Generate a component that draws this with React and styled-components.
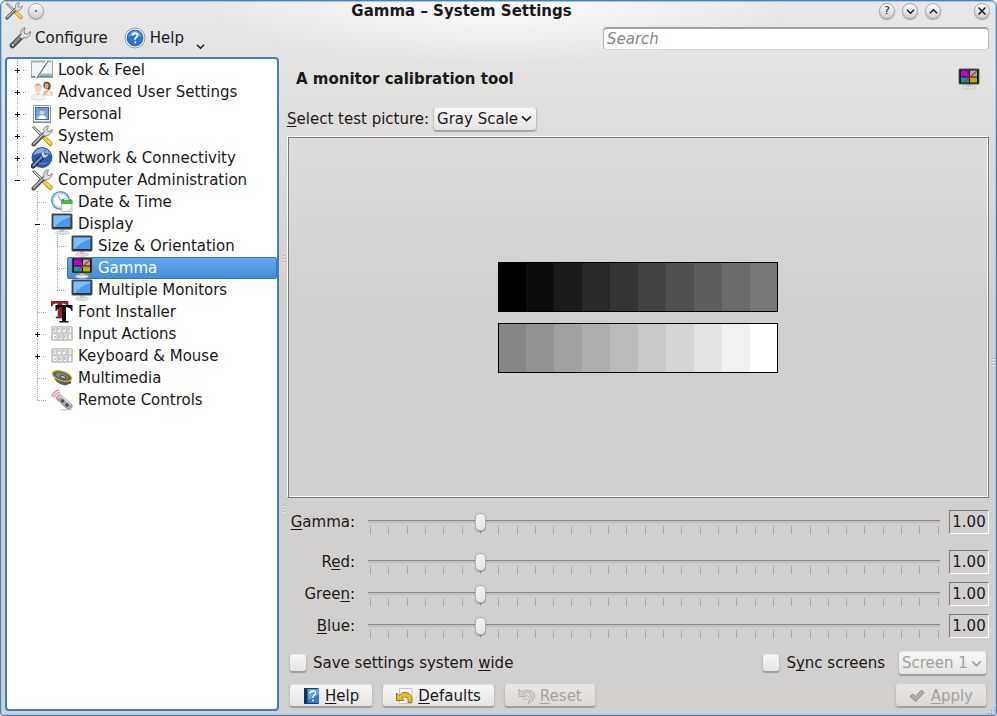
import React, { useState } from "react";
import styled, { createGlobalStyle, css } from "styled-components";

const tree = [
  { name: "Look & Feel", icon: "look", guides: ["tee"], toggle: "plus" },
  { name: "Advanced User Settings", icon: "users", guides: ["tee"], toggle: "plus" },
  { name: "Personal", icon: "personal", guides: ["tee"], toggle: "plus" },
  { name: "System", icon: "tools", guides: ["tee"], toggle: "plus" },
  { name: "Network & Connectivity", icon: "network", guides: ["tee"], toggle: "plus" },
  { name: "Computer Administration", icon: "tools", guides: ["end"], toggle: "minus" },
  { name: "Date & Time", icon: "clock", guides: ["blank", "tee"] },
  { name: "Display", icon: "monitor", guides: ["blank", "tee"], toggle: "minus" },
  { name: "Size & Orientation", icon: "monitor", guides: ["blank", "line", "tee"] },
  { name: "Gamma", icon: "gamma", guides: ["blank", "line", "tee"] },
  { name: "Multiple Monitors", icon: "monitor", guides: ["blank", "line", "end"] },
  { name: "Font Installer", icon: "font", guides: ["blank", "tee"] },
  { name: "Input Actions", icon: "keyboard", guides: ["blank", "tee"], toggle: "plus" },
  { name: "Keyboard & Mouse", icon: "keyboard", guides: ["blank", "tee"], toggle: "plus" },
  { name: "Multimedia", icon: "speaker", guides: ["blank", "tee"] },
  { name: "Remote Controls", icon: "remote", guides: ["blank", "end"] },
];

const darkGrays = ["#000000", "#0d0d0d", "#1b1b1b", "#282828", "#353535", "#434343", "#505050", "#5d5d5d", "#6b6b6b", "#787878"];
const lightGrays = ["#868686", "#939393", "#a1a1a1", "#aeaeae", "#bbbbbb", "#c9c9c9", "#d6d6d6", "#e4e4e4", "#f1f1f1", "#ffffff"];

const channels = [
  { id: "gamma", before: "", key: "G", after: "amma:" },
  { id: "red", before: "R", key: "e", after: "d:" },
  { id: "green", before: "Gree", key: "n", after: ":" },
  { id: "blue", before: "", key: "B", after: "lue:" },
];

const ticks = Array.from({ length: 32 }, (_, i) => i);

/* ---------- icons ---------- */

const MonitorStand = () => (
  <g>
    <ellipse cx="11" cy="19.500" rx="6.500" ry="1.800" fill="#e2e2e2" stroke="#b5b5b5" strokeWidth="0.600" />
    <path d="M9 15 H13 V19 H9 Z" fill="#c6c6c6" />
  </g>
);

const icons = {
  wrench: (
    <g>
      <path d="M3.500 18.500 L12.500 9.500" stroke="#4a4a4a" strokeWidth="5.500" strokeLinecap="round" />
      <path d="M4 17.500 L12.500 9" stroke="#8f8f8f" strokeWidth="2.500" strokeLinecap="round" />
      <path d="M16 0.800 C12.500 1.500 11 4.500 12 7.500 L10.500 9.500 L13 12 L15 10.800 C18.500 11.500 21.500 9 21.500 4.500 L18.500 7 L15.500 6.500 L15 3.800 Z" fill="#dedede" stroke="#6e6e6e" strokeWidth="0.900" />
      <circle cx="3.800" cy="18" r="1.500" fill="#f0f0f0" stroke="#333" strokeWidth="0.700" />
    </g>
  ),
  tools: (
    <g>
      <path d="M1.500 2.500 L3 1.500 L12 10 L10.500 11.500 Z" fill="#e3e3e3" stroke="#444" strokeWidth="0.900" />
      <path d="M11.500 13.500 L14 11 L21 17.500 Q22 20.500 19 21 Z" fill="#f3c321" stroke="#a8820d" strokeWidth="0.800" />
      <path d="M13.800 12.800 L20 18.500" stroke="#ffe98a" />
      <path d="M2.500 19.500 L13.500 8.500" stroke="#474747" strokeWidth="4" strokeLinecap="round" />
      <path d="M2.700 18.800 L13.500 8" stroke="#b9b9b9" strokeWidth="1.800" strokeLinecap="round" />
      <path d="M17.500 0.800 C14 0.800 12 3.500 13 7 L11.500 9.500 L13.500 11 C17.500 11 21 9 21.300 4.500 L18 6.800 L15.800 5.500 Z" fill="#dcdcdc" stroke="#707070" strokeWidth="0.800" />
    </g>
  ),
  look: (
    <g>
      <rect x="0.500" y="2" width="21" height="16" fill="#f3f4f4" stroke="#a5aaa9" />
      <rect x="1" y="2" width="14" height="1.500" fill="#9fb9b1" />
      <rect x="17" y="2" width="3" height="1.500" fill="#e69a9a" />
      <path d="M8 17 L10 14.500 H21 V17 Z" fill="#83c3bd" />
      <rect x="0" y="17" width="22" height="1.500" fill="#6c858b" />
      <path d="M5 19 L17 1" stroke="#fff" strokeWidth="3" />
      <path d="M5.500 19.500 L17.500 1.500" stroke="#5d5d5d" strokeWidth="1.100" />
    </g>
  ),
  users: (
    <g>
      <path d="M12 12 C12 8 20 8 21.500 12 V14.500 H12 Z" fill="#e8bd86" />
      <path d="M15 14 L18 9 L20 14 Z" fill="#f3f3f3" />
      <path d="M13 7 C11 1 15 0 17 1 C21 2 20 8 18 9 Z" fill="#6f4528" />
      <ellipse cx="15.500" cy="5" rx="2" ry="2.800" fill="#e2a577" />
      <path d="M0.500 18 C0 11 13 11 13.500 18 Q7 20.500 0.500 18 Z" fill="#f4f4f7" stroke="#cfcfd4" strokeWidth="0.700" />
      <path d="M5 12 L7 15 L9 12" fill="#f0cfb4" />
      <ellipse cx="7" cy="7.500" rx="3.200" ry="4.200" fill="#f3d6bf" />
      <path d="M3.500 7 C3 1 11 1 10.500 7 L9 4.500 L5 4.500 Z" fill="#c3a283" />
    </g>
  ),
  personal: (
    <g>
      <rect x="2.500" y="2.500" width="17" height="17" rx="1" fill="#f7f7f7" stroke="#979797" />
      <rect x="2" y="18.500" width="18" height="1.500" fill="#868686" />
      <rect x="4.500" y="4.500" width="13" height="12" fill="#6aa6f0" stroke="#3967ba" />
      <path d="M6.500 16 C6.500 11 15.500 11 15.500 16 Z" fill="#fff" />
      <circle cx="11" cy="9" r="2.600" fill="#f2cba5" />
      <path d="M8.300 8.500 C8 5 14 5 13.700 8.500 Q11 6.500 8.300 8.500" fill="#a27c58" />
    </g>
  ),
  network: (
    <g>
      <circle cx="11" cy="10.500" r="10" fill="#2a5cb0" stroke="#1d458c" strokeWidth="0.800" />
      <path d="M2 8 Q5 1.500 11 1 Q17 1.500 20 8 Q13 4 2 8" fill="#86aee8" />
      <path d="M4 15 Q11 20 18 15 Q11 17 4 15" fill="#5e92d8" />
      <path d="M2 19 L10 11" stroke="#18305a" strokeWidth="5" strokeLinecap="round" />
      <path d="M2.300 18.500 L11 9.800" stroke="#8294a8" strokeWidth="2.200" strokeLinecap="round" />
      <path d="M14.500 3.500 C11 4 9.500 6.500 11 9 L12.500 11 C15.500 11 17.500 9 17.500 6 L14.500 8 L13 6.500 Z" fill="#cfd9e4" stroke="#24436e" strokeWidth="0.600" />
    </g>
  ),
  clock: (
    <g>
      <circle cx="9.500" cy="9.500" r="8.700" fill="#dbe9f5" stroke="#5c94c8" strokeWidth="1.500" />
      <circle cx="9.500" cy="9.500" r="6.800" fill="#f8fafc" stroke="#b6cada" strokeWidth="0.800" />
      <path d="M9.500 9.500 L7 4.500 M9.500 9.500 L14 7.500" stroke="#848f98" strokeWidth="1" />
      <rect x="10.500" y="10.500" width="10.500" height="10" fill="#fafafa" stroke="#bdbdbd" />
      <rect x="10" y="9" width="11.500" height="4" fill="#48b936" />
      <path d="M12 8 V10 M19.500 8 V10" stroke="#336b2b" />
      <path d="M17 20.500 Q18 18 21 17.500" stroke="#c3c3c3" />
    </g>
  ),
  monitor: (
    <g>
      <MonitorStand />
      <rect x="0.800" y="0.800" width="20.400" height="15.400" rx="1" fill="#2b2b2b" stroke="#888" strokeWidth="0.800" />
      <rect x="2.500" y="2.500" width="17" height="11.500" fill="#479be8" />
      <path d="M2.500 2.500 H19.500 V4 Q9 7 4 14 H2.500 Z" fill="#7fbef6" />
    </g>
  ),
  gamma: (
    <g>
      <MonitorStand />
      <rect x="0.800" y="0.800" width="20.400" height="15.400" rx="1" fill="#161616" stroke="#999" strokeWidth="0.800" />
      <rect x="3" y="2.500" width="8" height="6" fill="#c400cb" />
      <rect x="12" y="2.500" width="7" height="6" fill="#a9a9a9" />
      <rect x="3" y="9.500" width="8" height="5" fill="#0c9aa4" />
      <rect x="12" y="9.500" width="7" height="5" fill="#b9b300" />
      <path d="M6 2.500 H11 V6 Z" fill="#7d1489" />
      <path d="M7 13.500 L19 3" stroke="#d3233c" strokeWidth="1.100" />
    </g>
  ),
  font: (
    <g>
      <path d="M0 0 H17 V5 H16 Q15.500 2 11 2 V15 H13 V17 H5 V16 H7 V2 Q1.500 2 1 5 H0 Z" fill="#b01f20" stroke="#5a0c0c" strokeWidth="0.600" />
      <path d="M4.500 4 H21.500 V10 H20.500 Q20 6.500 15 6 V20 H17.500 V21.500 H8.500 V20 H11 V6 Q6 6.500 5.500 10 H4.500 Z" fill="#090909" />
    </g>
  ),
  keyboard: (
    <g>
      <rect x="0.500" y="3.500" width="21" height="14" rx="1" fill="#d6d6d6" stroke="#cccccc" />
      <path d="M1.500 4 H5 V9.500 H1.500 Z M6.500 4 H10 V9.500 H6.500 Z M11.500 4 H15 V9.500 H11.500 Z M16.500 4 H20.500 V9.500 H16.500 Z M1.500 11 H6 V16.500 H1.500 Z M7.500 11 H11 V16.500 H7.500 Z M12.500 11 H16 V16.500 H12.500 Z M17.500 11 H20.500 V16.500 H17.500 Z" fill="#fafafa" stroke="#b2b2b2" strokeWidth="0.600" />
      <path d="M3 5 V8 M8 5 V7 M13 5 V7 M18 5 V8 M4 13 V15 M9 12 V15 M14 12 V15" stroke="#999" />
    </g>
  ),
  speaker: (
    <g>
      <path d="M3 9 Q4 17 14 18.500 L20 16.500 V12 Z" fill="#5d5d5d" />
      <ellipse cx="11" cy="9" rx="10" ry="4.600" transform="rotate(18 11 9)" fill="#54555a" stroke="#cdb81f" strokeWidth="1.400" />
      <ellipse cx="11" cy="9" rx="7" ry="2.800" transform="rotate(18 11 9)" fill="#84868e" />
      <ellipse cx="12" cy="10" rx="3" ry="1.600" transform="rotate(18 12 10)" fill="#b5b6bc" stroke="#333" strokeWidth="0.800" />
    </g>
  ),
  remote: (
    <g>
      <path d="M0.800 8 Q2 3 8 0.800 M3 8.500 Q4 5 9 3.200 M5 9.500 Q6 7 9.500 5.800" fill="none" stroke="#ea9ba3" strokeWidth="1.700" />
      <ellipse cx="15" cy="20.800" rx="6.500" ry="0.800" fill="#c8c8c8" />
      <path d="M5.500 10 Q7 5.500 11 7 L21 15.500 Q22 19.500 18 20 L15 19 Z" fill="#a6a6a6" stroke="#7c7c7c" strokeWidth="0.700" />
      <path d="M7 9 Q9 6.500 11 8 L20 15.500" fill="none" stroke="#e0e0e0" strokeWidth="1.500" />
      <circle cx="11.500" cy="12" r="1.700" fill="#4a4a4a" />
      <circle cx="16" cy="16" r="1.700" fill="#4a4a4a" />
    </g>
  ),
  help: (
    <g>
      <circle cx="11" cy="11" r="10" fill="#f4f4f4" stroke="#8d8d8d" strokeWidth="0.900" />
      <circle cx="11" cy="11" r="8" fill="#2874cf" stroke="#175099" strokeWidth="0.700" />
      <path d="M4 10 Q6 4 11 3.500 Q16 4 18 10 Q11 7 4 10" fill="#5b9fe4" />
      <path d="M8.600 8.500 Q8.600 6.200 11.200 6.200 Q13.700 6.400 13.500 8.600 Q13.300 10 11.200 11.200 V12.800 M11.200 14.200 V16.200" fill="none" stroke="#fff" strokeWidth="1.800" />
    </g>
  ),
  book: (
    <g>
      <path d="M4 3 H19 V19 H4 Z" fill="#3577d3" />
      <path d="M7 3 H19 V9 L7 16 Z" fill="#5f9fea" />
      <path d="M4 3 H7.500 V19 H4 Z" fill="#172f50" />
      <path d="M4.500 18.500 H18 M5 3.500 H18" stroke="#173d75" />
      <path d="M10 8.500 Q10 6 13 6 Q16 6 15.500 8.500 Q15 10 13 11.500 V13 M13 14.500 V16.500" fill="none" stroke="#fff" strokeWidth="1.400" />
    </g>
  ),
  undo: (
    <g>
      <path d="M6.500 3.500 H19 V18.500 H6.500 Z" fill="#f7f7f7" stroke="#c4c4c4" />
      <path d="M3.500 8 V15.500 H11 L8.500 13 Q12 10 14.500 13 Q15.500 15 15 17.500 H18.500 Q20 11.500 16 8.500 Q11 5.500 6 10.500 Z" fill="#eebc27" stroke="#92680f" strokeWidth="0.900" />
    </g>
  ),
  reset: (
    <g>
      <path d="M4 4 V11.500 H11 L8.500 9 Q13 6 15.500 9 Q17.500 13 13.500 16.500 V18.500 Q20.500 15 19.500 9 Q15.500 2.500 6.500 6.800 Z" fill="#cfcfce" stroke="#a8a8a8" strokeWidth="0.800" />
      <path d="M8 14 Q12 16 14 12 Q13 9 11 11" fill="none" stroke="#b5b5b5" />
    </g>
  ),
  check: (
    <path d="M4 11.500 L7 9 L9.500 11.500 L15.500 5 L18 7.500 L9.800 16.500 Z" fill="#b0b0b0" stroke="#858585" strokeWidth="0.900" />
  ),
};

const Icon = ({ name, size = 22 }) => (
  <Glyph width={size} height={size} viewBox="0 0 22 22" fill="none" aria-hidden="true">
    {icons[name]}
  </Glyph>
);

const Chevron = ({ up, size = 9 }) => (
  <Glyph width={size} height={size} viewBox="0 0 10 10" fill="none" stroke="currentColor" strokeWidth="1.500" aria-hidden="true">
    <path d={up ? "M1 7 L5 3 L9 7" : "M1 3 L5 7 L9 3"} />
  </Glyph>
);

// one 20px column of the dotted branch lines in front of a tree item
const Guide = ({ kind, toggle }) => (
  <Glyph width="20" height="22" viewBox="0 0 20 22" shapeRendering="crispEdges" aria-hidden="true">
    {kind !== "blank" && (
      <path
        d={kind === "end" ? "M10.500 0 V11" : "M10.500 0 V22"}
        stroke="#a6a6a6"
        strokeDasharray="1 1"
      />
    )}
    {(kind === "tee" || kind === "end") && (
      <path d={toggle ? "M16 11.500 H20" : "M10 11.500 H20"} stroke="#a6a6a6" strokeDasharray="1 1" />
    )}
    {toggle && (
      <g>
        <rect x="7" y="7" width="8" height="9" fill="#fff" />
        <path d="M8 11.500 H13" stroke="#000" />
        {toggle === "plus" && <path d="M10.500 9 V14" stroke="#000" />}
      </g>
    )}
  </Glyph>
);

function Channel({ channel, value, onChange }) {
  return (
    <>
      <ChannelLabel htmlFor={channel.id}>
        {channel.before}
        <u>{channel.key}</u>
        {channel.after}
      </ChannelLabel>
      <Track>
        <Range
          id={channel.id}
          type="range"
          min="0.4"
          max="3.5"
          step="0.05"
          value={value}
          onChange={(e) => onChange(channel.id, Number(e.target.value))}
        />
        <Ticks>
          {ticks.map((t) => (
            <Tick key={t} />
          ))}
        </Ticks>
      </Track>
      <Value htmlFor={channel.id}>{value.toFixed(2)}</Value>
    </>
  );
}

function App() {
  const [selected, setSelected] = useState("Gamma");
  const [values, setValues] = useState({ gamma: 1, red: 1, green: 1, blue: 1 });
  const [sync, setSync] = useState(false);

  const handleChange = (id, value) => {
    setValues({ ...values, [id]: value });
  };

  return (
    <>
      <GlobalStyle />
      <Window>
        <TitleBar>
          <Icon name="tools" size={18} />
          <RoundButton aria-label="On all desktops">
            <Dot />
          </RoundButton>
          <Title>Gamma – System Settings</Title>
          <WindowButtons>
            <RoundButton>?</RoundButton>
            <RoundButton aria-label="Minimize">
              <Chevron />
            </RoundButton>
            <RoundButton aria-label="Maximize">
              <Chevron up />
            </RoundButton>
          </WindowButtons>
          <RoundButton aria-label="Close">
            <Glyph width="10" height="10" viewBox="0 0 10 10" stroke="currentColor" strokeWidth="1.500">
              <path d="M1.500 1.500 L8.500 8.500 M8.500 1.500 L1.500 8.500" />
            </Glyph>
          </RoundButton>
        </TitleBar>

        <ToolBar>
          <ToolButton>
            <Icon name="wrench" />
            Configure
          </ToolButton>
          <ToolButton>
            <Icon name="help" />
            Help
            <MenuMark>
              <Chevron />
            </MenuMark>
          </ToolButton>
          <Search type="search" placeholder="Search" aria-label="Search" />
        </ToolBar>

        <Body>
          <Tree>
            {tree.map((item) => (
              <TreeRow key={item.name}>
                {item.guides.map((kind, i) => (
                  <Guide
                    key={i}
                    kind={kind}
                    toggle={i === item.guides.length - 1 ? item.toggle : undefined}
                  />
                ))}
                <TreeItem
                  $selected={selected === item.name}
                  onClick={() => setSelected(item.name)}
                >
                  <Icon name={item.icon} />
                  {item.name}
                </TreeItem>
              </TreeRow>
            ))}
          </Tree>

          <Splitter>
            <Grip />
            <Grip />
          </Splitter>

          <Module>
            <ModuleHeader>
              <h1>A monitor calibration tool</h1>
              <Icon name="gamma" />
            </ModuleHeader>

            <PictureRow>
              <label htmlFor="picture">
                <u>S</u>elect test picture:
              </label>
              <SelectBox>
                <Select id="picture" defaultValue="Gray Scale">
                  <option>Gray Scale</option>
                </Select>
                <Chevron size={11} />
              </SelectBox>
            </PictureRow>

            <TestPicture>
              <Scale>
                {darkGrays.map((color) => (
                  <Swatch key={color} $color={color} />
                ))}
              </Scale>
              <Scale>
                {lightGrays.map((color) => (
                  <Swatch key={color} $color={color} />
                ))}
              </Scale>
            </TestPicture>

            <Channels>
              {channels.map((channel) => (
                <Channel
                  key={channel.id}
                  channel={channel}
                  value={values[channel.id]}
                  onChange={handleChange}
                />
              ))}
            </Channels>

            <Options>
              <CheckLabel>
                <CheckBox type="checkbox" />
                <span>
                  Save settings system <u>w</u>ide
                </span>
              </CheckLabel>
              <Spacer />
              <CheckLabel>
                <CheckBox type="checkbox" checked={sync} onChange={() => setSync(!sync)} />
                <span>
                  S<u>y</u>nc screens
                </span>
              </CheckLabel>
              <SelectBox $disabled>
                <Select disabled aria-label="Screen">
                  <option>Screen 1</option>
                </Select>
                <Chevron size={11} />
              </SelectBox>
            </Options>

            <Buttons>
              <Button>
                <Icon name="book" />
                <span>
                  <u>H</u>elp
                </span>
              </Button>
              <Button>
                <Icon name="undo" />
                <span>
                  <u>D</u>efaults
                </span>
              </Button>
              <Button disabled>
                <Icon name="reset" />
                <span>
                  <u>R</u>eset
                </span>
              </Button>
              <Spacer />
              <Button disabled>
                <Icon name="check" />
                <span>
                  <u>A</u>pply
                </span>
              </Button>
            </Buttons>
          </Module>
        </Body>

        <EdgeGrip />
        <CornerGrip width="8" height="8" viewBox="0 0 8 8" aria-hidden="true">
          <path d="M6 0 H7 V1 H6 Z M3 3 H4 V4 H3 Z M6 3 H7 V4 H6 Z M0 6 H1 V7 H0 Z M3 6 H4 V7 H3 Z" fill="#8d8b89" />
        </CornerGrip>
      </Window>
    </>
  );
}

export default App;

/* ---------- styles ---------- */

const GlobalStyle = createGlobalStyle`
  * {
    box-sizing: border-box;
  }

  body {
    margin: 0;
    background: #ffffff;
  }

  body, button, input, select {
    font-family: "DejaVu Sans", sans-serif;
    font-size: 15px;
    line-height: 18px;
    color: #1a1818;
  }

  button {
    border: none;
    background: none;
    padding: 0;
    cursor: pointer;
  }

  u {
    text-underline-offset: 2px;
    text-decoration-skip-ink: none;
  }
`;

const Glyph = styled.svg`
  display: block;
  flex: none;
`;

const raised = css`
  background: linear-gradient(#f7f7f6, #e6e5e4);
  border: 1px solid #c3c1bf;
  border-top-color: #e4e3e2;
  border-bottom-color: #a09e9c;
  box-shadow: 0 1px 1px rgba(0, 0, 0, 0.25);
`;

const Window = styled.div`
  position: relative;
  display: flex;
  flex-direction: column;
  min-height: 100vh;
  border: 1px solid #4482bd;
  border-radius: 6px 6px 3px 3px;
  box-shadow: inset 0 0 0 1px #a9c6e2;
  background:
    radial-gradient(ellipse 300px 64px at 50% 0, rgba(255, 255, 255, 0.85), rgba(255, 255, 255, 0)),
    linear-gradient(#e8e8e8, #d2d0ce 300px);
`;

const TitleBar = styled.header`
  display: flex;
  align-items: center;
  height: 20px;
  padding: 0 6px 0 4px;
  gap: 5px;
`;

const Title = styled.div`
  flex: 1;
  text-align: center;
  font-weight: bold;
`;

const RoundButton = styled.button`
  display: flex;
  align-items: center;
  justify-content: center;
  width: 16px;
  height: 16px;
  border: 1px solid #aaa8a6;
  border-radius: 50%;
  background: linear-gradient(#fbfbfb, #d2d1d0);
  box-shadow: 0 1px 1px rgba(0, 0, 0, 0.3);
  font-size: 11px;
  line-height: 14px;
`;

const WindowButtons = styled.div`
  display: flex;
  gap: 7px;
  margin-right: 28px;
`;

const Dot = styled.span`
  width: 2px;
  height: 2px;
  background: #777;
`;

const ToolBar = styled.div`
  display: flex;
  align-items: center;
  height: 36px;
  padding: 0 7px 2px 8px;
  gap: 16px;
`;

const ToolButton = styled.button`
  display: flex;
  align-items: center;
  gap: 4px;
`;

const MenuMark = styled.span`
  align-self: flex-end;
  padding-left: 8px;
  margin-bottom: -2px;
`;

const Search = styled.input`
  width: 386px;
  height: 23px;
  margin-left: auto;
  padding: 0 3px;
  border: 1px solid #b5b3b1;
  border-top: 2px solid #a3a19f;
  border-bottom-color: #d5d4d3;
  border-radius: 4px;
  background: #ffffff;
  outline: none;

  &::placeholder {
    color: #888786;
    font-style: italic;
  }
`;

const Body = styled.div`
  display: flex;
  flex: 1;
  padding: 0 7px 4px 4px;
`;

const Tree = styled.ul`
  width: 274px;
  margin: 0;
  padding: 0;
  list-style: none;
  border: 2px solid #3f7ec0;
  border-radius: 4px;
  background: #ffffff;
`;

const TreeRow = styled.li`
  display: flex;
  height: 22px;
`;

const TreeItem = styled.button`
  display: flex;
  flex: 1;
  align-items: center;
  gap: 5px;
  padding-left: 4px;
  white-space: nowrap;

  ${(props) =>
    props.$selected &&
    css`
      color: #ffffff;
      background: linear-gradient(#62aaf2, #438bd6);
      border-radius: 3px;
      box-shadow: inset 0 0 0 1px #3577bd;
    `}
`;

const Splitter = styled.div`
  display: flex;
  flex-direction: column;
  align-items: center;
  justify-content: center;
  gap: 242px;
  width: 8px;
`;

const Grip = styled.span`
  width: 3px;
  height: 8px;
  background: repeating-linear-gradient(#bbb9b7 0 1px, #e6e5e4 1px 2px, transparent 2px 3px);
`;

const EdgeGrip = styled(Grip)`
  position: absolute;
  top: 50%;
  right: 2px;
`;

const CornerGrip = styled.svg`
  position: absolute;
  right: 0;
  bottom: 0;
`;

const Module = styled.main`
  display: flex;
  flex: 1;
  flex-direction: column;
  min-width: 0;
  padding-bottom: 4px;
`;

const ModuleHeader = styled.div`
  display: flex;
  align-items: center;
  justify-content: space-between;
  height: 44px;
  padding: 0 9px;

  h1 {
    margin: 0;
    font-size: 15px;
    line-height: 20px;
  }
`;

const PictureRow = styled.div`
  display: flex;
  align-items: center;
  height: 35px;
  gap: 4px;
`;

const SelectBox = styled.div`
  display: grid;
  align-items: center;
  height: 24px;
  border-radius: 4px;
  color: ${(props) => (props.$disabled ? "#a3a19f" : "#1a1818")};
  ${raised}

  > * {
    grid-area: 1 / 1;
  }

  > svg {
    justify-self: end;
    margin-right: 4px;
    pointer-events: none;
  }
`;

const Select = styled.select`
  appearance: none;
  padding: 0 18px 0 3px;
  border: none;
  background: none;
  color: inherit;
  opacity: 1;
  outline: none;
`;

const TestPicture = styled.div`
  display: flex;
  flex: 1;
  flex-direction: column;
  align-items: center;
  justify-content: center;
  gap: 11px;
  border: 1px solid #ffffff;
  border-right-color: #7c7a79;
  border-bottom-color: #7c7a79;
  box-shadow: inset 1px 1px 0 #7c7a79, inset -1px -1px 0 #ffffff;
`;

const Scale = styled.div`
  display: grid;
  grid-template-columns: repeat(10, 1fr);
  width: 280px;
  height: 50px;
  outline: 1px solid #000000;
  outline-offset: -1px;
`;

const Swatch = styled.span`
  background: ${(props) => props.$color};
`;

/* the overall gamma stands a little apart from the three colours */
const Channels = styled.div`
  display: grid;
  grid-template-columns: 68px 1fr 40px;
  grid-template-rows: 32px repeat(3, 24px);
  row-gap: 8px;
  margin-top: 12px;
`;

const ChannelLabel = styled.label`
  text-align: right;
  line-height: 24px;
`;

const Track = styled.div`
  display: flex;
  flex-direction: column;
  padding: 0 6px 0 10px;
`;

const Range = styled.input`
  appearance: none;
  width: 100%;
  height: 24px;
  margin: 0;
  background: linear-gradient(#8b8988, #8b8988) center 10px / calc(100% - 6px) 1px no-repeat,
    linear-gradient(#c3c1c0, #c3c1c0) center 11px / calc(100% - 6px) 2px no-repeat;
  outline: none;
  z-index: 1;

  &::-webkit-slider-thumb {
    appearance: none;
    width: 11px;
    height: 18px;
    border: 1px solid #b3b1af;
    border-radius: 5px;
    background: linear-gradient(#f4f4f3, #e6e5e4);
    box-shadow: 0 1px 1px rgba(0, 0, 0, 0.35);
  }
`;

const Ticks = styled.div`
  display: flex;
  justify-content: space-between;
  margin-top: -8px;
  padding: 0 4px 0 5px;
`;

const Tick = styled.span`
  width: 1px;
  height: 8px;
  background: #a9a7a5;
`;

const Value = styled.output`
  height: 24px;
  text-align: center;
  line-height: 22px;
  border: 1px solid #ffffff;
  border-top-color: #7c7a79;
  border-left-color: #7c7a79;
`;

const Options = styled.div`
  display: flex;
  align-items: center;
  height: 26px;
  margin-top: 12px;
  padding: 0 2px;
`;

const Spacer = styled.span`
  flex: 1;
`;

const CheckLabel = styled.label`
  display: flex;
  align-items: center;
  gap: 6px;

  & + ${SelectBox} {
    margin-left: 13px;
  }
`;

const CheckBox = styled.input`
  appearance: none;
  width: 18px;
  height: 18px;
  margin: 0;
  border-radius: 4px;
  ${raised}

  &:checked {
    background: radial-gradient(circle, #33312f 0 3px, #eeedec 4px);
  }
`;

const Buttons = styled.div`
  display: flex;
  gap: 9px;
  margin-top: 8px;
  padding: 0 2px;
`;

const Button = styled.button`
  display: flex;
  align-items: center;
  height: 23px;
  padding: 0 13px 0 10px;
  gap: 3px;
  border-radius: 4px;
  ${raised}

  &:disabled {
    color: #a3a19f;
    background: linear-gradient(#e8e7e6, #dad9d8);
    cursor: default;
  }
`;
